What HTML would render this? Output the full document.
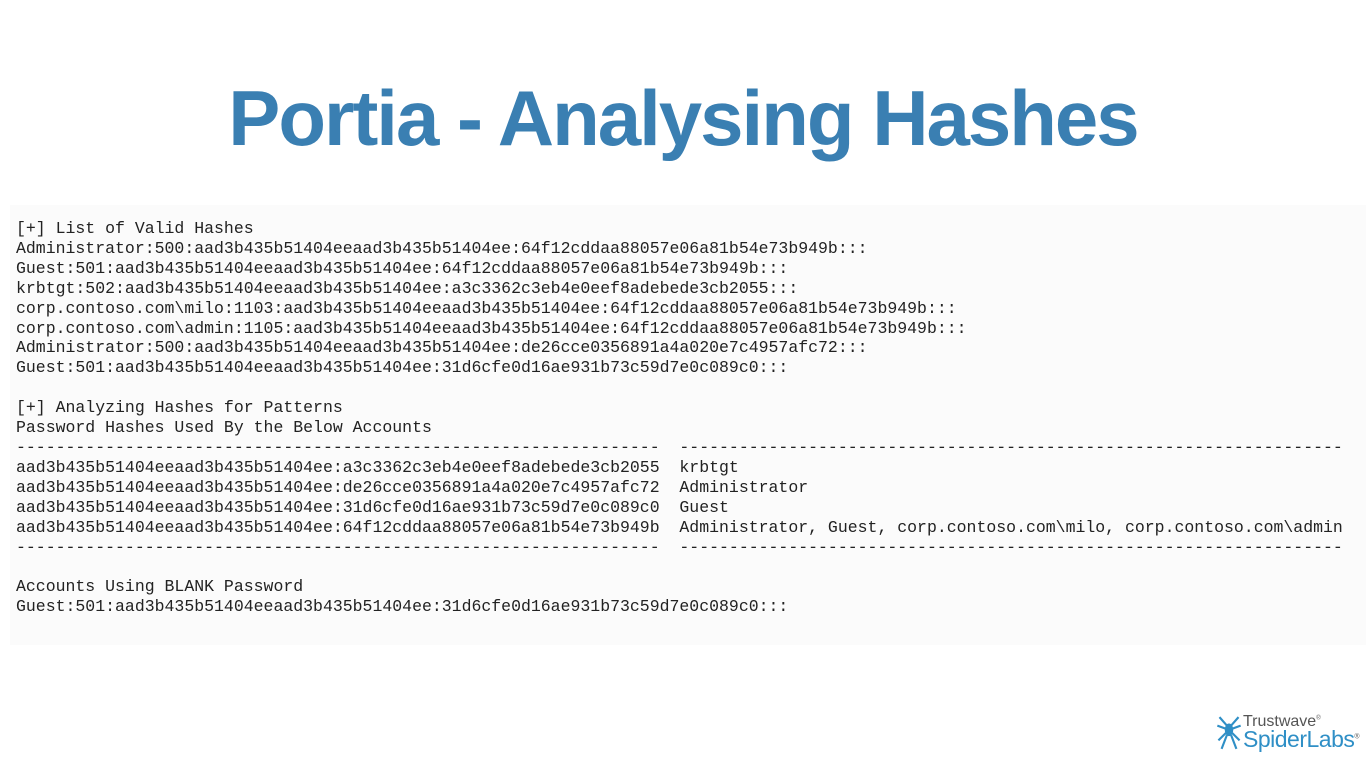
<!DOCTYPE html>
<html><head><meta charset="utf-8"><style>
html,body{margin:0;padding:0;background:#fff;width:1366px;height:768px;overflow:hidden;position:relative}
h1{position:absolute;left:0;width:1366px;top:68px;margin:0;text-align:center;font-family:"Liberation Sans",sans-serif;font-weight:bold;font-size:78px;color:#3a7fb2;letter-spacing:-2px;line-height:100px}
.box{position:absolute;left:10px;top:205px;width:1356px;height:440px;background:#fbfbfb}
pre{position:absolute;left:16px;top:219px;margin:0;font-family:"Liberation Mono",monospace;font-size:16.5px;line-height:19.9px;color:#222}
.logo{position:absolute;left:1218px;top:713px;font-family:"Liberation Sans",sans-serif;color:#2f8fc6}
</style></head><body>
<h1>Portia - Analysing Hashes</h1>
<div class="box"></div>
<pre>[+] List of Valid Hashes
Administrator:500:aad3b435b51404eeaad3b435b51404ee:64f12cddaa88057e06a81b54e73b949b:::
Guest:501:aad3b435b51404eeaad3b435b51404ee:64f12cddaa88057e06a81b54e73b949b:::
krbtgt:502:aad3b435b51404eeaad3b435b51404ee:a3c3362c3eb4e0eef8adebede3cb2055:::
corp.contoso.com\milo:1103:aad3b435b51404eeaad3b435b51404ee:64f12cddaa88057e06a81b54e73b949b:::
corp.contoso.com\admin:1105:aad3b435b51404eeaad3b435b51404ee:64f12cddaa88057e06a81b54e73b949b:::
Administrator:500:aad3b435b51404eeaad3b435b51404ee:de26cce0356891a4a020e7c4957afc72:::
Guest:501:aad3b435b51404eeaad3b435b51404ee:31d6cfe0d16ae931b73c59d7e0c089c0:::

[+] Analyzing Hashes for Patterns
Password Hashes Used By the Below Accounts
-----------------------------------------------------------------  -------------------------------------------------------------------
aad3b435b51404eeaad3b435b51404ee:a3c3362c3eb4e0eef8adebede3cb2055  krbtgt
aad3b435b51404eeaad3b435b51404ee:de26cce0356891a4a020e7c4957afc72  Administrator
aad3b435b51404eeaad3b435b51404ee:31d6cfe0d16ae931b73c59d7e0c089c0  Guest
aad3b435b51404eeaad3b435b51404ee:64f12cddaa88057e06a81b54e73b949b  Administrator, Guest, corp.contoso.com\milo, corp.contoso.com\admin
-----------------------------------------------------------------  -------------------------------------------------------------------

Accounts Using BLANK Password
Guest:501:aad3b435b51404eeaad3b435b51404ee:31d6cfe0d16ae931b73c59d7e0c089c0:::</pre>
<div class="logo">
<svg width="26" height="36" viewBox="0 0 24 34" style="position:absolute;left:-2px;top:2px" stroke="#2f8fc6" stroke-width="2" fill="none">
<ellipse cx="12" cy="14" rx="3" ry="5" fill="#2f8fc6"/>
<path d="M10 10 L3 2 M14 10 L21 2 M9 13 L1 10 M15 13 L23 10 M9 17 L2 24 M15 17 L22 24 M10 19 L5 32 M14 19 L19 32"/>
</svg>
<div style="position:absolute;left:25px;top:0;font-size:16px;color:#555;white-space:nowrap">Trustwave<sup style="font-size:6px">®</sup></div>
<div style="position:absolute;left:25px;top:13px;font-size:23px;white-space:nowrap;letter-spacing:-0.5px">SpiderLabs<sup style="font-size:7px;color:#555">®</sup></div>
</div>
</body></html>
